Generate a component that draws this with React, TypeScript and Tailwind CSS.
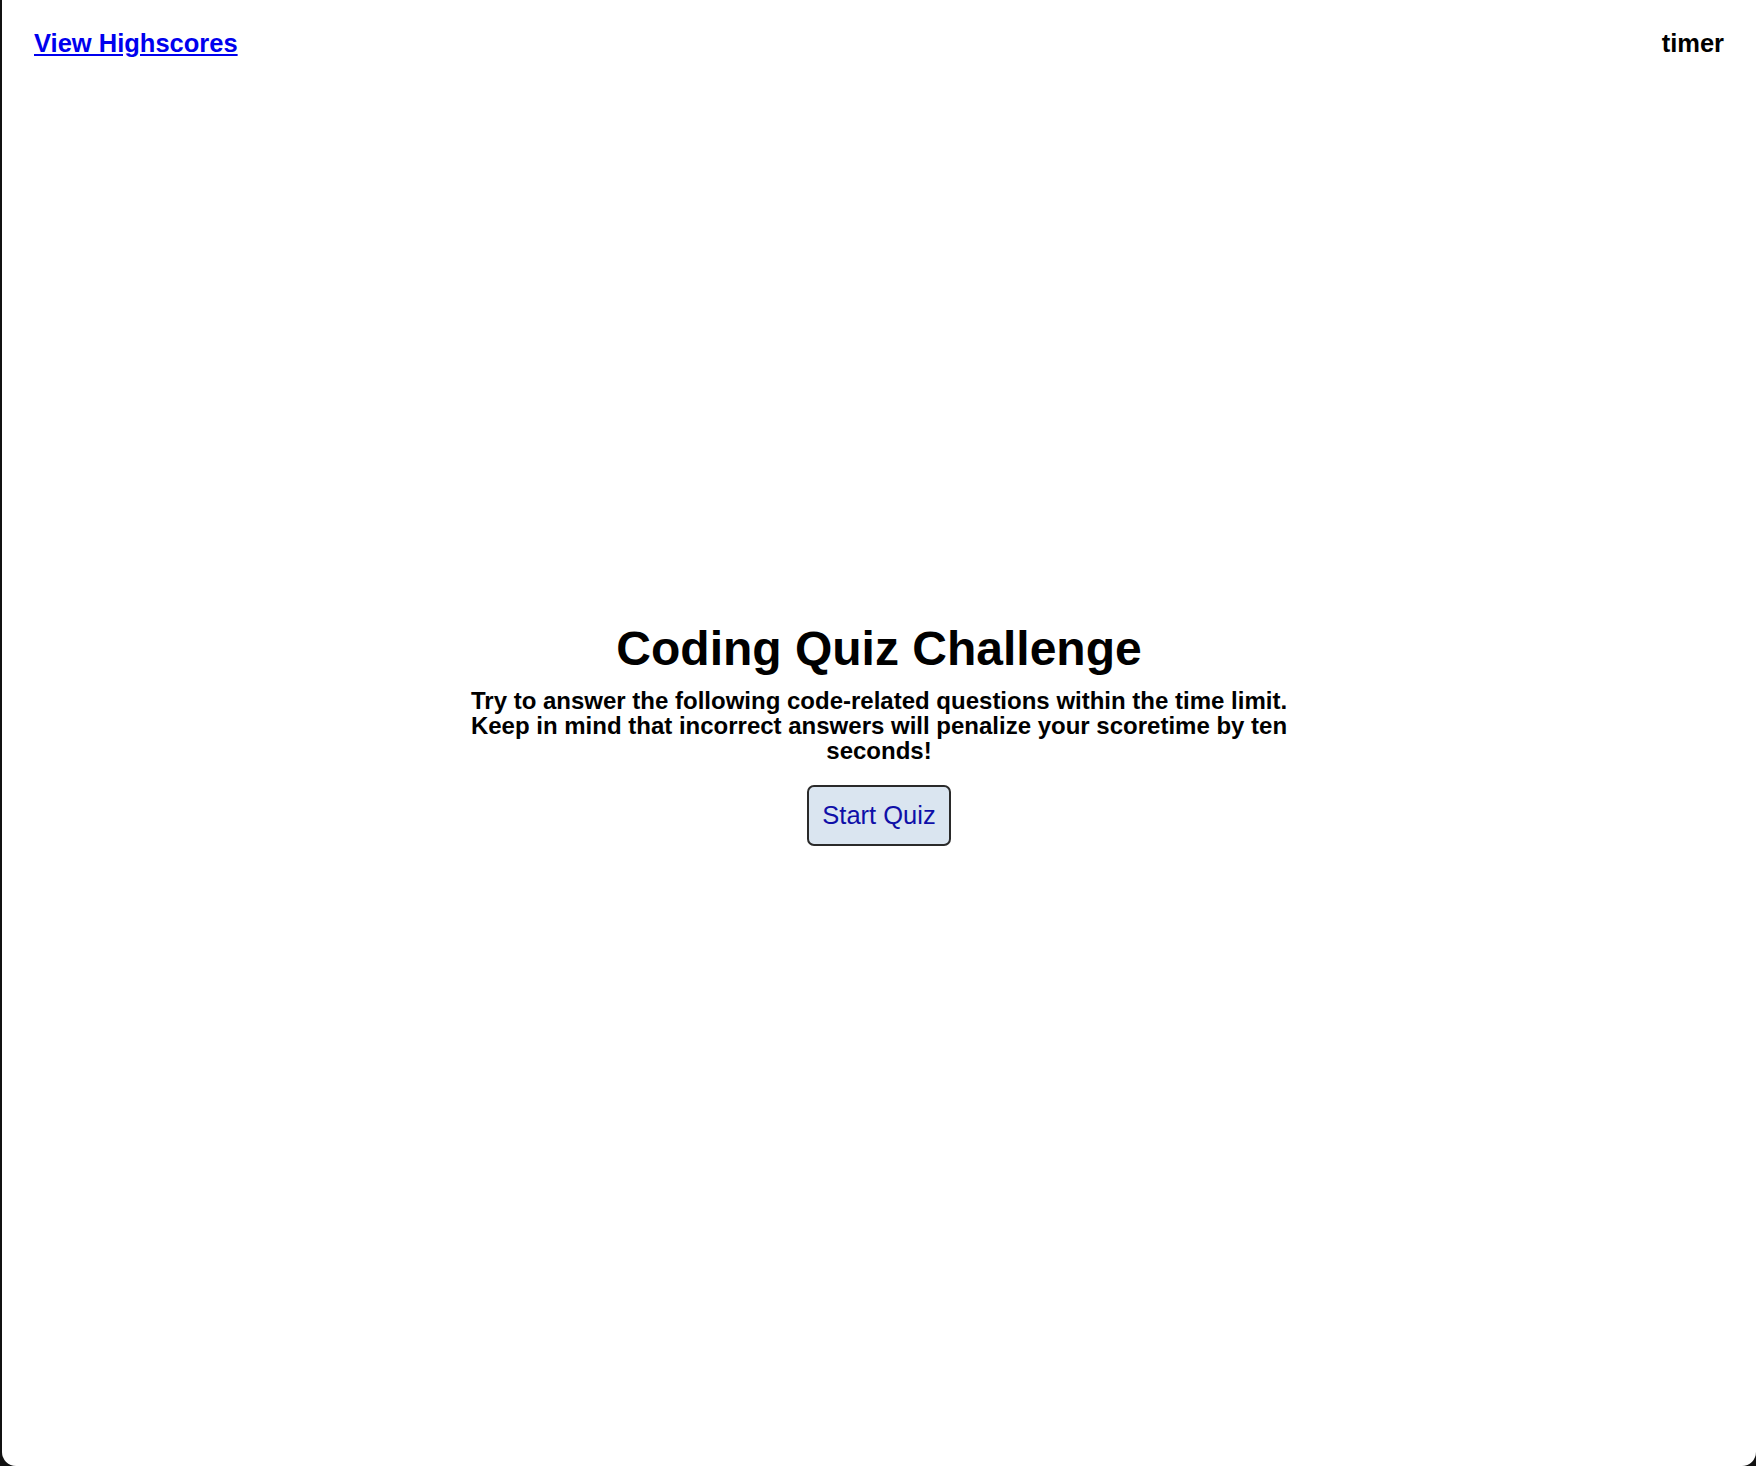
export default function App() {
  return (
    <div className="h-[1466px] w-full bg-[#111] font-['Liberation_Sans',Arial,sans-serif]">
      <div className="ml-[2px] flex h-full flex-col rounded-b-[14px] bg-white">
        <header className="flex h-[58px] items-start justify-between px-8 pt-[28px]">
          <a
            href="#"
            className="text-[25.5px] font-bold leading-[30px] text-[#0000ee] underline"
          >
            View Highscores
          </a>
          <span className="text-[25.5px] font-bold leading-[30px] text-black">
            timer
          </span>
        </header>

        <main className="flex flex-1 flex-col items-center justify-center">
          <h1 className="text-[48px] font-bold leading-[55px] text-black">
            Coding Quiz Challenge
          </h1>
          <p className="mt-[12px] w-[830px] text-center text-[24px] font-bold leading-[25px] text-black">
            Try to answer the following code-related questions within the time
            limit. Keep in mind that incorrect answers will penalize your
            scoretime by ten seconds!
          </p>
          <button className="mt-[22px] flex h-[61px] items-center rounded-[7px] border-2 border-[#2a2a2a] bg-[#dae5f0] px-[13px] text-[25.5px] text-[#0f0fa8]">
            Start Quiz
          </button>
        </main>

        <div className="h-[58px]" />
      </div>
    </div>
  );
}
